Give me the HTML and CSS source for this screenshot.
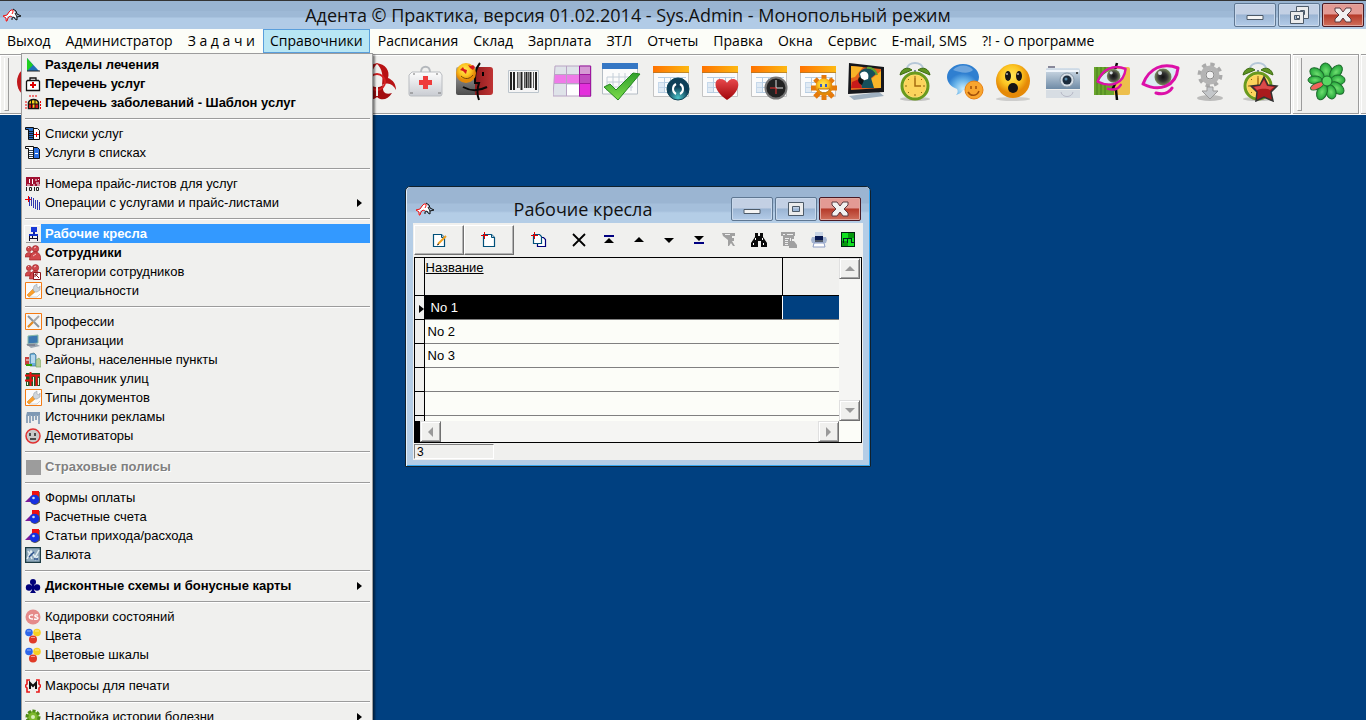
FILE: index.html
```html
<!DOCTYPE html>
<html lang="ru">
<head>
<meta charset="UTF-8">
<meta name="viewport" content="width=device-width, initial-scale=1.0">
<title>Адента © Практика</title>
<link rel="stylesheet" href="styles.css">
</head>
<body>

<!-- shared shapes and gradients -->
<svg class="defs" aria-hidden="true">
    <defs>
        <linearGradient id="g-orange"><stop offset="0" stop-color="#ff7200"/><stop offset="1" stop-color="#fdb913"/></linearGradient>
        <linearGradient id="g-white" x2="0" y2="1"><stop offset="0" stop-color="#fdfdfd"/><stop offset="1" stop-color="#c9ccd2"/></linearGradient>
        <linearGradient id="g-red" x2="0" y2="1"><stop offset="0" stop-color="#e8484c"/><stop offset="1" stop-color="#a00509"/></linearGradient>
        <linearGradient id="g-dark-red"><stop offset="0" stop-color="#8c1a1c"/><stop offset="1" stop-color="#c03434"/></linearGradient>
        <linearGradient id="g-grey" x2="0" y2="1"><stop offset="0" stop-color="#a8a8a8"/><stop offset="1" stop-color="#4c4c4c"/></linearGradient>
        <linearGradient id="g-steel" x2="0" y2="1"><stop offset="0" stop-color="#d5e0ea"/><stop offset="1" stop-color="#6f8ba6"/></linearGradient>
        <linearGradient id="g-check" x2="0" y2="1"><stop offset="0" stop-color="#2fa02c"/><stop offset="1" stop-color="#7ddc4a"/></linearGradient>
        <radialGradient id="g-face" cx=".45" cy=".35"><stop offset="0" stop-color="#ffe95a"/><stop offset=".6" stop-color="#fcc421"/><stop offset="1" stop-color="#e58a08"/></radialGradient>
        <radialGradient id="g-bubble" cx=".5" cy=".8"><stop offset="0" stop-color="#c8ecfc"/><stop offset=".6" stop-color="#64b0e8"/><stop offset="1" stop-color="#2f7fd0"/></radialGradient>
        <radialGradient id="g-teal" cx=".5" cy=".9"><stop offset="0" stop-color="#4cc4c8"/><stop offset="1" stop-color="#0e3f58"/></radialGradient>
        <radialGradient id="g-eye"><stop offset="0" stop-color="#111"/><stop offset=".5" stop-color="#333"/><stop offset="1" stop-color="#7c8c60"/></radialGradient>
        <radialGradient id="g-leaf"><stop offset="0" stop-color="#6fdf70"/><stop offset="1" stop-color="#23a53a"/></radialGradient>
    </defs>
    <symbol id="logo" viewBox="0 0 20 14">
        <path d="M1 8h2l3-2 3-4h3l1 3 2 3-2 2-3-2-2 1-2-1-2 3-1 2H4v-3z" fill="#fff"/>
        <path d="M10 9L8 8l-2 2-1 3H4v-3L1 8l4-1 2-3 2-2h2v2l-1 2" fill="none" stroke="#f01010"/>
        <path d="M11 1l3 2 1 3 4 2-4 1v3l-2-1-1-2-2 1v2M13 5l2 4" fill="none" stroke="#111"/>
    </symbol>
    <symbol id="calendar" viewBox="0 0 40 40">
        <path d="M2.500 5.500h35v29h-35z" fill="#fbfbfb" stroke="#c4c4c4"/>
        <path d="M2 4h36v7H2z" fill="url(#g-orange)"/><path d="M2 10.500h36" stroke="#a8762c" stroke-opacity=".7"/>
        <path d="M7 15.500h28M7 20.500h28M7 25.500h28M7 30.500h28M7.500 20v10M13.500 15v15M19.500 15v15M25.500 15v15M31.500 15v15" stroke="#b8cee2" fill="none"/>
        <path d="M7 20h6v10H7z" fill="#cfe0f0" fill-opacity=".6"/>
    </symbol>
    <symbol id="alarm" viewBox="0 0 40 40">
        <ellipse cx="19" cy="37" rx="15" ry="2" fill="#999" fill-opacity=".5"/>
        <path d="M11 7c0-8 16-8 16 0" fill="none" stroke="#b5c7d8" stroke-width="2"/>
        <path d="M4 13c1-6 7-9 12-5zM34 13c-1-6-7-9-12-5z" fill="#5d9422" stroke="#3d6b13"/>
        <path d="M18 8h2v4h-2z" fill="#789"/>
        <circle cx="19" cy="24" r="13" fill="#ffe27a" stroke="#6a9a1e" stroke-width="3"/>
        <circle cx="19" cy="24" r="11" fill="#fcd45c"/>
        <path d="M19 16v8h6" fill="none" stroke="#a56c10" stroke-width="1.500"/>
        <path d="M19 14v2M19 32v2M9 24h2M27 24h2M12 17l1 1M12 31l1-1M26 31l-1-1M26 17l-1 1" stroke="#8a6410"/>
    </symbol>
    <symbol id="eye" viewBox="0 0 40 40">
        <path d="M3 22C9 9 23 4 36 7c-2 15-15 22-33 15z" fill="#dcebf4"/>
        <circle cx="22" cy="15" r="8.500" fill="url(#g-eye)"/><circle cx="19" cy="11" r="2" fill="#d4dce0"/>
        <path d="M2 22C8 6 22 0 37 6c-2 19-19 24-35 16zM15 31c7 2 13 0 16-5" fill="none" stroke="#dc10a8" stroke-width="3" stroke-linecap="round" stroke-linejoin="round"/>
    </symbol>
    <symbol id="people" viewBox="0 0 16 16">
        <g fill="#d0484c" stroke="#9a1c20" stroke-width=".6"><circle cx="4" cy="4" r="2.600"/><path d="M0 12c0-6 8-6 8 0z"/><circle cx="10.500" cy="3.800" r="3.200"/><path d="M4.500 15c0-11 11.500-11 11.500 0z"/></g>
        <path d="M9 3l2-1M3 3l1-1M8 11l3-2" stroke="#f8c0c0"/>
    </symbol>
    <symbol id="wrench" viewBox="0 0 17 17">
        <path d="M.5.500h16v16H.5z" fill="#fbfbfb" stroke="#f47b14"/>
        <path d="M4 15h8l3-3" stroke="#d4d4d4" fill="none"/>
        <path d="M2 13l6-6 2 3-6 5z" fill="#fba02c" stroke="#d97a10" stroke-width=".5"/>
        <path d="M8 8l1-4 3-2 0 3 2 1 1-2 0 4-3 2-2 0z" fill="#cfd6dc" stroke="#8d979f" stroke-width=".5"/>
    </symbol>
    <symbol id="shapes" viewBox="0 0 16 16">
        <path d="M14 2h1v11h-2z" fill="#777"/><path d="M7 1h7v10H7z" fill="#f01010"/>
        <path d="M0 12l7-7v7z" fill="#7a1a9a"/><circle cx="10" cy="10" r="5" fill="#555"/><circle cx="9.500" cy="9.500" r="4.700" fill="#1530e0"/><circle cx="8.500" cy="8" r="1.300" fill="#cde"/>
    </symbol>
    <symbol id="balls" viewBox="0 0 16 16">
        <circle cx="4" cy="4.500" r="3.800" fill="#2e66ea"/><circle cx="12" cy="4.500" r="3.800" fill="#f6cf22"/><circle cx="8" cy="11.500" r="4" fill="#e03a26"/>
        <path d="M2 3h4M10 3h4M6 9.500h4" stroke="#fff" stroke-opacity=".5"/>
    </symbol>
    <symbol id="sheet" viewBox="0 0 16 16">
        <path d="M2.500 2.500h8l3 3v9h-11z" fill="#fff" stroke="#00507a" stroke-width="1.200"/><path d="M10.500 2.500v3h3" fill="#bcd" stroke="#00507a"/>
    </symbol>
</svg>

<header class="titlebar">
    <svg class="logo"><use href="#logo"/></svg>
    <h1 class="title">Адента © Практика, версия 01.02.2014 - Sys.Admin - Монопольный режим</h1>
    <div class="window-buttons">
        <button class="window-button" aria-label="Свернуть"><svg width="20" height="20"><path d="M2 10.500h16v4H2z" fill="#f4f4f4" stroke="#4d5a68"/></svg></button>
        <button class="window-button" aria-label="Восстановить"><svg width="22" height="20"><path d="M8.500 1.500h12v12h-12zM12.500 5.500v4h4v-4z" fill="#ececec" stroke="#4d5a68" fill-rule="evenodd"/><path d="M2.500 6.500h13v12h-13zM6.500 10.500v4h5v-4z" fill="#ececec" stroke="#4d5a68" fill-rule="evenodd"/></svg></button>
        <button class="window-button close" aria-label="Закрыть"><svg width="20" height="20"><path d="M2 3h5l3 4 3-4h5v3l-4 4 4 4v3h-5l-3-4-3 4H2v-3l4-4-4-4z" fill="#f1f1f1" stroke="#5c3a40"/></svg></button>
    </div>
</header>

<nav class="menubar">
    <a href="#">Выход</a>
    <a href="#">Администратор</a>
    <a href="#">З а д а ч и</a>
    <a href="#" class="active">Справочники</a>
    <a href="#">Расписания</a>
    <a href="#">Склад</a>
    <a href="#">Зарплата</a>
    <a href="#">ЗТЛ</a>
    <a href="#">Отчеты</a>
    <a href="#">Правка</a>
    <a href="#">Окна</a>
    <a href="#">Сервис</a>
    <a href="#">E-mail, SMS</a>
    <a href="#">?! - О программе</a>
</nav>

<div class="toolbar">
    <div class="tool-group">
        <button class="tool" aria-label="Выход"><svg viewBox="0 0 40 40"><circle cx="20" cy="20" r="17" fill="#c0181c"/></svg></button>
        <button class="tool after-gap" aria-label="Заболевания"><svg viewBox="0 0 40 40">
            <path d="M19 1c10 1 14 8 12 15 5 2 8 6 8 12-3-6-8-8-14-5 1-9 1-16-6-22z" fill="#b81214"/>
            <path d="M21 1C11 2 7 9 9 16c-5 2-8 6-8 12 3-6 8-8 14-5-1-9-1-16 6-22z" fill="#b81214"/>
            <path d="M26 23c-1 8 3 10 9 8-4 7-11 8-15 4-4 4-11 3-15-4 6 2 10 0 9-8 4 3 8 3 12 0z" fill="#a30d10"/>
            <circle cx="20" cy="20" r="8" fill="none" stroke="#d42022" stroke-width="2"/><circle cx="20" cy="20" r="3" fill="#f0f0ee"/><path d="M20 25v9" stroke="#f0f0ee" stroke-width="2"/></svg></button>
        <button class="tool" aria-label="Аптечка"><svg viewBox="0 0 40 40">
            <path d="M15 10c0-7 9-7 9 0" fill="none" stroke="#b4b8bc" stroke-width="2"/><path d="M6 10h28l2 3v19q0 2-2 2H5q-2 0-2-2V13z" fill="url(#g-white)" stroke="#b9bcc0"/>
            <path d="M17 14h5v4h4v5h-4v4h-5v-4h-4v-5h4z" fill="#ee3b3b"/><path d="M4 31h3M32 31h3M8 11v2M31 11v2" stroke="#777"/></svg></button>
        <button class="tool" aria-label="Смайл"><svg viewBox="0 0 40 40">
            <path d="M1 7q0-2 2-2h20v28H3q-2 0-2-2z" fill="url(#g-grey)"/><path d="M22 5h13q3 0 3 3v22q0 3-3 3H20V22h-1q0-9 3-17z" fill="url(#g-dark-red)"/>
            <path d="M25 1c-5 6-5 12-5 20h4c-2 6-2 12 0 17M8 25c9 5 16 4 24 0" fill="none" stroke="#080808" stroke-width="2"/><path d="M28 10v4" stroke="#000" stroke-width="2"/>
            <circle cx="11" cy="11" r="10" fill="url(#g-face)"/><path d="M8 9l3 3 1-4-3-1-1-2-3 3zM15 6l3 2 2-3-2-2-2 1-3-1z" fill="#d81a1a"/><path d="M6 14c4 4 9 3 12-1" fill="none" stroke="#7b4a08"/></svg></button>
        <button class="tool" aria-label="Штрих-код"><svg viewBox="0 0 40 40">
            <path d="M4.500 8.500h30v22h-30z" fill="#f5f5f5" stroke="#bcc5cc"/><path d="M7 10v18M10 10v18M17.500 10v18M22.500 10v16M26.500 10v16M32 10v18" stroke="#222" stroke-width="2"/><path d="M13.500 10v16M15 10v16M20.500 10v16M24.500 10v16M29.500 10v16" stroke="#555"/></svg></button>
        <button class="tool" aria-label="Таблица"><svg viewBox="0 0 40 40">
            <path d="M2 4h36v30H0z" fill="#dfe3e9"/><path d="M1 12h25v9H1z" fill="#ef7ae8"/><path d="M26 4h12v9H26z" fill="#d59ad4"/><path d="M26 13h12v8H26z" fill="#c04cc0"/><path d="M26 21h12v14H26z" fill="#e42fdc"/><path d="M13 23h13v11H13z" fill="#fff"/>
            <path d="M2 4h36v30H0zM1 12.500h37M1 21.500h37M13.500 4v30" fill="none" stroke="#b9a4c4"/><path d="M26.500 4h11v30h-11zM26 12.500h12M26 21.500h12" fill="none" stroke="#a018a0"/></svg></button>
        <button class="tool" aria-label="Готово"><svg viewBox="0 0 40 40">
            <path d="M.5 2h35v30H.5z" fill="#fbfbfb" stroke="#b4bcc4"/><path d="M0 1h36v6H0z" fill="#3577c4"/><path d="M5 15h26M5 20h26M5 25h26M5 15v14M11 11v18M17 11v18M23 11v18M29 11v18" stroke="#c4ced8"/>
            <path d="M2 25l6-3 6 6L31 11l7 1L16 38z" fill="url(#g-check)" stroke="#23861f"/></svg></button>
        <button class="tool" aria-label="Синхронизация"><svg viewBox="0 0 40 40">
            <use href="#calendar"/><circle cx="27" cy="27" r="11" fill="url(#g-teal)" stroke="#0d4356"/><path d="M25 22c-4 2-4 8 0 10M29 22c4 2 4 8 0 10" fill="none" stroke="#fff" stroke-width="2"/></svg></button>
        <button class="tool" aria-label="Избранное"><svg viewBox="0 0 40 40">
            <use href="#calendar"/><path d="M27 38C12 28 14 17 20 17c4 0 6 2 7 4 1-2 3-4 6-4 7 0 9 11-6 21z" fill="url(#g-red)"/></svg></button>
        <button class="tool" aria-label="Время"><svg viewBox="0 0 40 40">
            <use href="#calendar"/><circle cx="27" cy="26" r="10.500" fill="#222" stroke="#777" stroke-width="2"/><path d="M27 18v8h7" fill="none" stroke="#ddd"/><path d="M27 26h-6M27 26v6" stroke="#e33"/></svg></button>
        <button class="tool" aria-label="Праздники"><svg viewBox="0 0 40 40">
            <use href="#calendar"/><g stroke="#e57a0c" stroke-width="5"><path d="M26 13v25M13 26h26M17 17l18 18M35 17L17 35"/></g><circle cx="26" cy="25" r="8.500" fill="url(#g-face)"/><path d="M23 22v3M28 22v3" stroke="#345cc8" stroke-width="2"/><path d="M20 27c3 5 9 5 12 0z" fill="#fff" stroke="#b87310"/></svg></button>
        <button class="tool" aria-label="Телевизор"><svg viewBox="0 0 40 40">
            <path d="M2 34l30-4 5 4-30 4z" fill="#9fb0c0"/><path d="M2 1l35 4v25L1 32z" fill="#15171c"/><path d="M4 4l30 3v19L4 28z" fill="#e3641c"/><path d="M4 4l12 1-8 10-4 1zM24 17l10-8v17H22z" fill="#f8b428"/><path d="M5 20l7-3 3 9H4z" fill="#c81a1a"/><path d="M12 12c2-7 14-8 17 0l-5 4 3 10H15z" fill="#16505c"/><path d="M13 12c4-5 10-2 8 5l-6 2z" fill="#fff"/><path d="M12 15c-2 4 0 7 3 8l2-5z" fill="#111"/><path d="M20 6c5-1 9 3 10 7" stroke="#5ca032" stroke-width="2" fill="none"/></svg></button>
        <button class="tool" aria-label="Будильник"><svg viewBox="0 0 40 40"><use href="#alarm"/></svg></button>
        <button class="tool" aria-label="Сообщения"><svg viewBox="0 0 40 40">
            <path d="M18 2c9 0 16 6 16 13S27 28 18 28c-1 2-3 4-7 5 2-2 2-4 1-6C6 25 2 20 2 15 2 8 9 2 18 2z" fill="url(#g-bubble)"/><path d="M8 8c5-6 16-6 20 0-5 5-14 2-20 0z" fill="#fff" fill-opacity=".3"/>
            <circle cx="29" cy="28" r="9" fill="#f9a52e" stroke="#e88212"/><path d="M26 24v3M31 24v3M23 30c3 5 9 4 11-1" fill="none" stroke="#a14e08" stroke-width="1.500"/></svg></button>
        <button class="tool" aria-label="Удивление"><svg viewBox="0 0 40 40">
            <ellipse cx="19" cy="37" rx="17" ry="2" fill="#aaa" fill-opacity=".5"/><circle cx="19" cy="19" r="17" fill="url(#g-face)"/><ellipse cx="14" cy="14" rx="3" ry="5" fill="#151515"/><ellipse cx="25" cy="14" rx="3" ry="5" fill="#151515"/><ellipse cx="19" cy="26" rx="5" ry="5" fill="#151515"/><path d="M13 11v2M24 11v2" stroke="#fff"/></svg></button>
        <button class="tool" aria-label="Фото"><svg viewBox="0 0 40 40">
            <path d="M3 7q0-1 1-1h31q2 0 2 2v19H3z" fill="url(#g-steel)"/><path d="M5 6h7v-2H5z" fill="#889"/><path d="M3 9h33" stroke="#eef4fa" stroke-width="2"/><circle cx="24" cy="18" r="7" fill="#d5dde5" stroke="#8697a8"/><circle cx="24" cy="18" r="4.500" fill="#1b2b3c"/><circle cx="23" cy="17" r="1.500" fill="#58a"/><circle cx="34" cy="11" r="1" fill="#222"/>
            <path d="M3 28h34v8H3z" fill="#c7d1dc" fill-opacity=".6"/><path d="M18 30c1 6 11 6 12 0" fill="none" stroke="#aab" stroke-opacity=".7"/></svg></button>
        <button class="tool" aria-label="Картинка"><svg viewBox="0 0 40 40">
            <path d="M2 5h21v28H2z" fill="#6aa52c"/><path d="M5 5v28M9 5v28M13 5v28" stroke="#47801c"/><path d="M22 5h14q2 0 2 2v24q0 2-2 2H22z" fill="#edbf4c"/><path d="M25 1l-2 7v14l-2 4 3 2 1 10" stroke="#080808" stroke-width="2.500" fill="none"/>
            <use href="#eye" x="4" y="2" width="32" height="32"/></svg></button>
        <button class="tool" aria-label="Просмотр"><svg viewBox="0 0 40 40"><use href="#eye"/></svg></button>
        <button class="tool" aria-label="Настройки"><svg viewBox="0 0 40 40">
            <ellipse cx="20" cy="36" rx="13" ry="3" fill="#999" fill-opacity=".6"/><circle cx="20" cy="13" r="10" fill="none" stroke="#aaa" stroke-width="5" stroke-dasharray="4 3.850"/><circle cx="20" cy="13" r="7" fill="#ddd" stroke="#b4b4b4" stroke-width="5"/><circle cx="20" cy="13" r="4" fill="#f1f1f1" stroke="#888"/><path d="M17 25h6v4h5l-8 8-8-8h5z" fill="#c4c7ca" stroke="#999"/></svg></button>
        <button class="tool" aria-label="Напоминания"><svg viewBox="0 0 40 40"><use href="#alarm"/><path d="M25 15l4 8 9 1-6 6 2 9-9-4-8 4 1-9-6-6 9-1z" fill="#a91a1c" stroke="#333" stroke-width="1.500"/><path d="M25 18l3 6 7 1-4 3c-4-2-10-1-13 0l-3-3 6-1z" fill="#f06060" fill-opacity=".7"/></svg></button>
    </div>
    <div class="tool-group">
        <button class="tool icq" aria-label="ICQ"><svg viewBox="0 0 40 40">
            <g stroke="#1d6b2c"><g fill="url(#g-leaf)"><ellipse cx="19" cy="9" rx="6" ry="8" transform="rotate(-12 19 9)"/><ellipse cx="29" cy="10" rx="5" ry="8" transform="rotate(40 29 10)"/><ellipse cx="31" cy="18" rx="7" ry="5"/><ellipse cx="30" cy="26" rx="8" ry="5" transform="rotate(38 30 26)"/><ellipse cx="24" cy="30" rx="5" ry="7" transform="rotate(-15 24 30)"/><ellipse cx="15" cy="30" rx="5" ry="8" transform="rotate(20 15 30)"/><ellipse cx="10" cy="12" rx="8" ry="5" transform="rotate(35 10 12)"/><ellipse cx="8" cy="18" rx="7" ry="4"/></g><ellipse cx="10" cy="24" rx="7" ry="3" fill="#f0645c" transform="rotate(-25 10 24)"/><circle cx="20" cy="19" r="5" fill="#58d864"/></g></svg></button>
    </div>
    <div class="tool-group rest"></div>
</div>

<ul class="dropdown">
    <li><a href="#" class="bold"><svg><path d="M2 1v13h12z" fill="#2070b8"/><path d="M2 1v13l6-6z" fill="#20d020"/><path d="M2 14h13" stroke="#222"/></svg><span>Разделы лечения</span></a></li>
    <li><a href="#" class="bold"><svg><path d="M5 4V2h6v2M2.500 4.500h11l1 1v9h-13v-9z" fill="#fff" stroke="#111" stroke-width="1.300"/><path d="M8 6v6M5 9h6" stroke="#e00000" stroke-width="2"/></svg><span>Перечень услуг</span></a></li>
    <li><a href="#" class="bold"><svg><path d="M4 1h9M1 6v8M15.500 6v8" stroke="#e00" stroke-dasharray="2 1"/><path d="M3.500 13.500v-6q1-3 5-3t5 3v6z" fill="#f5d020" stroke="#111" stroke-width="1.500"/><path d="M4 9h4v4H4zM10 9h3v4h-3z" fill="#d01818"/><path d="M3 9h10M6.500 4v9M10 4v9" stroke="#111"/></svg><span>Перечень заболеваний - Шаблон услуг</span></a></li>
    <li class="separator"></li>
    <li><a href="#"><svg><path d="M7.500 2.500h5l2 2v9h-7z" fill="#fff" stroke="#111"/><path d="M9 8.500h5M11.500 6v5" stroke="#e00"/><path d="M.5 1.500h8v12h-5v-10h-3z" fill="#2b6fc8" stroke="#111"/><path d="M4 5.500h4M4 7.500h4M4 9.500h4M4 11.500h4" stroke="#123"/></svg><span>Списки услуг</span></a></li>
    <li><a href="#"><svg><path d="M7.500 2.500h5l2 2v9h-7z" fill="#2b6fe0" stroke="#111"/><path d="M10 8.500h3" stroke="#fff"/><path d="M.5 1.500h8v12h-5v-10h-3z" fill="#fff" stroke="#111"/><path d="M4 5.500h4M4 7.500h4M4 9.500h4M4 11.500h4" stroke="#345"/></svg><span>Услуги в списках</span></a></li>
    <li class="separator"></li>
    <li><a href="#"><svg><path d="M1 1h14v9H1z" fill="#a01030"/><path d="M4.500 3v4M7.500 3v5M11 3v2M13.500 3v1M11 7h3" stroke="#fff"/><path d="M2 9h3M8 9h2M12 9h3" stroke="#fff"/><path d="M1.500 11v4M4.500 11.500h2v3h-2zM9.500 11v4M11.500 11.500h2v3h-2z" stroke="#222" fill="none"/></svg><span>Номера прайс-листов для услуг</span></a></li>
    <li><a href="#" class="parent"><svg><path d="M4.500 2v9M6.500 2v9M8.500 3v10M10.500 5v9M12.500 5v10M14.500 7v8" stroke="#3038b0"/><path d="M0 4.500h6M3.500 1v6" stroke="#e00"/></svg><span>Операции с услугами и прайс-листами</span></a></li>
    <li class="separator"></li>
    <li><a href="#" class="bold selected"><svg><path d="M6 1h6v5H6z" fill="#1838d8"/><path d="M8 6h2v2H8z" fill="#1020a0"/><path d="M4 8h9v2H4z" fill="#1030c8"/><path d="M4.500 10v5M7.500 10v3M12.500 10v5M4 12.500h8" stroke="#101030"/></svg><span>Рабочие кресла</span></a></li>
    <li><a href="#" class="bold"><svg><use href="#people"/></svg><span>Сотрудники</span></a></li>
    <li><a href="#"><svg><use href="#people"/><path d="M8.500 8.500h7v7h-7z" fill="#fff" stroke="#8a1518"/><path d="M10 10l4 4M10 10h3M10 10v3" stroke="#8a1518"/></svg><span>Категории сотрудников</span></a></li>
    <li><a href="#"><svg class="framed"><use href="#wrench"/></svg><span>Специальности</span></a></li>
    <li class="separator"></li>
    <li><a href="#"><svg class="framed" viewBox="0 0 17 17"><path d="M.5.500h16v16H.5z" fill="#f5f5f5" stroke="#f47b14"/><path d="M3 3l11 11" stroke="#8b949c" stroke-width="2"/><path d="M14 3L3 14" stroke="#a9a9a9" stroke-width="2"/><path d="M3 14l5-5" stroke="#e98c20" stroke-width="2"/></svg><span>Профессии</span></a></li>
    <li><a href="#"><svg><path d="M3 3l10-1v8l-10 1z" fill="#3b78b0" stroke="#8ba"/><path d="M1 11l9-1 5 3-9 2z" fill="#99a5b0"/><path d="M2 12h8" stroke="#667"/></svg><span>Организации</span></a></li>
    <li><a href="#"><svg><path d="M5 2l4-1 2 2v11H5z" fill="#6cb0dc" stroke="#3a6880" stroke-width=".7"/><path d="M0 5h4v8H0z" fill="#c8423c"/><path d="M11 8l3-2 2 3v6h-5z" fill="#b8cc98" stroke="#7a6" stroke-width=".7"/><path d="M6 4h4M6 6h4M6 8h4M6 10h4M1 8h3" stroke="#fff"/><path d="M1 13h6" stroke="#390" stroke-width="2"/></svg><span>Районы, населенные пункты</span></a></li>
    <li><a href="#"><svg><path d="M1 2h14v13H1z" fill="#1e5a28"/><path d="M0 4.500h15M0 9.500h9M5.500 1v14M11.500 4v11" stroke="#e81010" stroke-width="2"/><path d="M8.500 6v9M13.500 7v7M2.500 11v3" stroke="#f0f0e0"/></svg><span>Справочник улиц</span></a></li>
    <li><a href="#"><svg class="framed"><use href="#wrench"/></svg><span>Типы документов</span></a></li>
    <li><a href="#"><svg><path d="M2 3h13v4H1z" fill="#7f99b4"/><path d="M2 7v7M5 6v8M8 7v5M11 6v5M14 6v9" stroke="#91a6bc" stroke-width="2"/></svg><span>Источники рекламы</span></a></li>
    <li><a href="#"><svg><circle cx="8" cy="8" r="7" fill="#c9c9c9" stroke="#e03030" stroke-width="1.500"/><path d="M5 5v3M10 5v3M5 11h6" stroke="#222" stroke-width="1.500"/></svg><span>Демотиваторы</span></a></li>
    <li class="separator"></li>
    <li><a href="#" class="bold disabled"><svg><path d="M1 1h15v15H1z" fill="#9c9c9c"/></svg><span>Страховые полисы</span></a></li>
    <li class="separator"></li>
    <li><a href="#"><svg><use href="#shapes"/></svg><span>Формы оплаты</span></a></li>
    <li><a href="#"><svg><use href="#shapes"/></svg><span>Расчетные счета</span></a></li>
    <li><a href="#"><svg><use href="#shapes"/></svg><span>Статьи прихода/расхода</span></a></li>
    <li><a href="#"><svg><path d="M.5.500h15v15H.5z" fill="#8fa9bc" stroke="#1d3c44" stroke-width="1.500"/><path d="M2 12l4-8 4 6 4-7M3 4l4 8M10 13l3-4" stroke="#e4eef2" stroke-width="1.500" fill="none"/><path d="M4 10l5-5M9 12h4" stroke="#2a508c" stroke-width="1.500"/></svg><span>Валюта</span></a></li>
    <li class="separator"></li>
    <li><a href="#" class="bold parent"><svg><g fill="#00007a"><circle cx="8" cy="4" r="3"/><circle cx="4" cy="9.500" r="3.200"/><circle cx="12" cy="9.500" r="3.200"/><path d="M7 5h2v7l2 3H5l2-3z"/></g></svg><span>Дисконтные схемы и бонусные карты</span></a></li>
    <li class="separator"></li>
    <li><a href="#"><svg><circle cx="8" cy="8" r="7.500" fill="#e58a8a"/><path d="M8 6c-5-1-5 4 0 4M13 6c-4-1-4 2-1 2 2 1 1 3-3 2" stroke="#fff" stroke-width="1.300" fill="none"/></svg><span>Кодировки состояний</span></a></li>
    <li><a href="#"><svg><use href="#balls"/></svg><span>Цвета</span></a></li>
    <li><a href="#"><svg><use href="#balls"/></svg><span>Цветовые шкалы</span></a></li>
    <li class="separator"></li>
    <li><a href="#"><svg><path d="M5 2H2v4L0 8l2 2v4h3M11 2h3v4l2 2-2 2v4h-3" stroke="#e81818" stroke-width="1.600" fill="none"/><path d="M5 11V5l3 3 3-3v6" stroke="#111" stroke-width="2" fill="none"/></svg><span>Макросы для печати</span></a></li>
    <li class="separator"></li>
    <li><a href="#" class="parent"><svg><circle cx="8" cy="8" r="6" fill="#7cb82c" stroke="#4f8a18" stroke-width="3" stroke-dasharray="3 1.500"/><circle cx="8" cy="8" r="2" fill="#d8ecb8"/></svg><span>Настройка истории болезни</span></a></li>
</ul>

<main class="desktop">
    <section class="window">
        <header class="window-title">
            <svg class="logo"><use href="#logo"/></svg>
            <h2 class="title">Рабочие кресла</h2>
            <div class="window-buttons">
                <button class="window-button" aria-label="Свернуть"><svg width="20" height="20"><path d="M2 10.500h16v4H2z" fill="#f4f4f4" stroke="#4d5a68"/></svg></button>
                <button class="window-button" aria-label="Развернуть"><svg width="20" height="20"><path d="M2.500 3.500h15v13h-15zM6.500 7.500v5h7v-5z" fill="#ececec" stroke="#4d5a68" fill-rule="evenodd"/></svg></button>
                <button class="window-button close" aria-label="Закрыть"><svg width="20" height="20"><path d="M2 3h5l3 4 3-4h5v3l-4 4 4 4v3h-5l-3-4-3 4H2v-3l4-4-4-4z" fill="#f1f1f1" stroke="#5c3a40"/></svg></button>
            </div>
        </header>
        <div class="client">
            <div class="record-bar">
                <button class="record-button wide raised" aria-label="Изменить"><svg><use href="#sheet"/><path d="M7 12l8-8" stroke="#f0a020" stroke-width="2"/><path d="M6 13l2-1" stroke="#222"/></svg></button>
                <button class="record-button wide raised" aria-label="Добавить"><svg><use href="#sheet"/><path d="M0 3.500h7M3.500 0v7" stroke="#e00000"/></svg></button>
                <button class="record-button wide" aria-label="Копировать"><svg><path d="M6.500 5.500h6l2 2v7h-8z" fill="#fff" stroke="#00007a" stroke-width="1.200"/><path d="M2.500 2.500h6l2 2v7h-8z" fill="#fff" stroke="#00507a" stroke-width="1.200"/><path d="M0 3.500h7M3.500 0v7" stroke="#e00000"/></svg></button>
                <button class="record-button" aria-label="Удалить"><svg><path d="M2 2l12 12M14 2L2 14" stroke="#000" stroke-width="1.800"/></svg></button>
                <button class="record-button" aria-label="Первая"><svg><path d="M3 4h10" stroke="#000080" stroke-width="2"/><path d="M8 6l5 5H3z"/></svg></button>
                <button class="record-button" aria-label="Предыдущая"><svg><path d="M8 5l5 5H3z"/></svg></button>
                <button class="record-button" aria-label="Следующая"><svg><path d="M8 11l5-5H3z"/></svg></button>
                <button class="record-button" aria-label="Последняя"><svg><path d="M8 9l5-5H3z"/><path d="M3 11h10" stroke="#000080" stroke-width="2"/></svg></button>
                <button class="record-button" aria-label="Фильтр" disabled><svg><path d="M1 1h13v3h-3v2h2v3h-2l3 5h-2l-2-3-2 3H7V8L2 4z" fill="#a0a0a0"/><path d="M4 2.500h5" stroke="#eee"/></svg></button>
                <button class="record-button" aria-label="Поиск"><svg><path d="M4 1h3v3h2V1h3v4l4 6v4h-6V9H7v6H0v-4l4-6z" fill="#0a0a0a"/><path d="M4.500 6v2M11.500 6v2M2.500 11v2M12.500 11v2" stroke="#fff"/></svg></button>
                <button class="record-button" aria-label="Отчет" disabled><svg><path d="M0 0h14v4h-1v3h-2v2h2l3 4v3H8v-2H2V4H0z" fill="#a0a0a0"/><path d="M2 2.500h2M6 2.500h6M4 6.500h4M4 8.500h3M4 10.500h3M4 12.500h3M9.500 6v3" stroke="#eee"/></svg></button>
                <button class="record-button" aria-label="Печать"><svg><path d="M4 0h8v4H4z" fill="#c8d4e4"/><path d="M1 5h14l1 3-1 3H1L0 8z" fill="#a4b4d0"/><path d="M4 4h8v4H4z" fill="#081850"/><path d="M4 9h8" stroke="#000"/><path d="M3 11h10l1 4H2z" fill="#fff" stroke="#8c9cc4"/></svg></button>
                <button class="record-button" aria-label="График"><svg shape-rendering="crispEdges"><path d="M1 0h14v15H1z" fill="#10e020"/><path d="M8 1h6v5H8zM2 9h6v5H2z" fill="#04980c"/><path d="M3.500 11V6.500h4v4M7.500 6.500h4v4h2" stroke="#022" fill="none"/><path d="M1.500.500h13v14h-13z" fill="none" stroke="#021"/></svg></button>
            </div>
            <div class="grid-box">
                <div class="table-view">
                    <table class="records">
                        <thead>
                            <tr><td class="marker"></td><th class="name"><span>Название</span></th><td></td></tr>
                        </thead>
                        <tbody>
                            <tr class="current"><td class="marker"><svg width="5" height="8"><path d="M0 0l5 4-5 4z"/></svg></td><td class="name">No 1</td><td></td></tr>
                            <tr><td class="marker"></td><td class="name">No 2</td><td></td></tr>
                            <tr><td class="marker"></td><td class="name">No 3</td><td></td></tr>
                            <tr><td class="marker"></td><td class="name"></td><td></td></tr>
                            <tr><td class="marker"></td><td class="name"></td><td></td></tr>
                            <tr><td class="marker"></td><td class="name"></td><td></td></tr>
                        </tbody>
                    </table>
                </div>
                <div class="scroll vertical">
                    <button class="scroll-button" aria-label="Вверх"><svg width="10" height="6"><path d="M5 0l5 5H0z" fill="#999"/></svg></button>
                    <button class="scroll-button" aria-label="Вниз"><svg width="10" height="6"><path d="M5 5l5-5H0z" fill="#999"/></svg></button>
                </div>
                <div class="scroll horizontal">
                    <button class="scroll-button" aria-label="Влево"><svg width="6" height="10"><path d="M0 5l5-5v10z" fill="#999"/></svg></button>
                    <button class="scroll-button" aria-label="Вправо"><svg width="6" height="10"><path d="M5 5L0 0v10z" fill="#999"/></svg></button>
                </div>
            </div>
            <footer class="status"><span class="count">3</span></footer>
        </div>
    </section>
</main>

</body>
</html>
```

FILE: styles.css
```css
* {
    box-sizing: border-box;
}

body {
    display: flex;
    flex-direction: column;
    height: 100vh;
    margin: 0;
    overflow: hidden;
    font-family: "Liberation Sans", Arial, sans-serif;
    font-size: 13px;
    color: #000;
    background-color: #004080;
}

button {
    margin: 0;
    padding: 0;
    border: none;
    background: none;
}

a {
    color: inherit;
    text-decoration: none;
}

.defs {
    position: absolute;
    width: 0;
    height: 0;
}

/* title bars */
.titlebar {
    display: flex;
    align-items: center;
    height: 29px;
    padding: 0 2px;
    border-top: 1px solid #333;
    background: linear-gradient(#99b4d1 0 10px, #9eb9d6 10px 16px, #b1cbe6 17px);
}

.logo {
    width: 20px;
    height: 14px;
}

.title {
    flex: 1;
    margin: 0;
    font-family: "Open Sans", "Noto Sans", sans-serif;
    font-size: 18px;
    font-weight: normal;
    line-height: 26px;
    text-align: center;
    color: #111;
}

.window-buttons {
    display: flex;
    gap: 2px;
}

.window-button {
    display: flex;
    align-items: center;
    justify-content: center;
    width: 42px;
    height: 24px;
    border: 1px solid #5f7792;
    border-radius: 2px;
    background: linear-gradient(#c3d0e4 0 45%, #9ab4d3 50%, #b4cce8);
    box-shadow: inset 0 0 0 1px #c9d9ec;
}

.window-button.close {
    border-color: #4a1a24;
    background: linear-gradient(#e39a94 0 45%, #b53a2a 50%, #d0705c);
    box-shadow: inset 0 0 0 1px #e0a8a0;
}

/* main menu */
.menubar {
    display: flex;
    gap: 1px;
    height: 25px;
    padding-bottom: 1px;
    background-color: #fcfdf8;
    font-family: "Open Sans", "Noto Sans", sans-serif;
    font-size: 14px;
    line-height: 24px;
}

.menubar a {
    padding: 0 7px;
    white-space: nowrap;
}

.menubar .active {
    padding: 0 6px;
    border: 1px solid #5a9fdc;
    line-height: 22px;
    background-color: #b8e6f4;
}

/* toolbar */
.toolbar {
    display: flex;
    height: 61px;
    border-bottom: 1px solid #fff;
    background-color: #f0f0ee;
}

.tool-group {
    display: flex;
    align-items: center;
    padding: 0 6px 4px 4px;
    border: 1px solid #9c9c9c;
    border-left: none;
    box-shadow: inset 1px 1px #fff, 1px 0 #fff;
    margin-right: 2px;
}

.tool-group::before {
    content: "";
    width: 3px;
    height: 52px;
    margin: 4px 1px 0 0;
    border: 1px solid #9c9c9c;
    border-left-color: #fff;
    border-top: none;
}

.tool-group.rest {
    flex: 1;
    margin: 0;
}

.tool-group.rest::before {
    display: none;
}

.tool {
    flex: none;
    width: 49px;
    height: 48px;
    padding: 0 5px 0 4px;
}

.tool svg {
    display: block;
    width: 40px;
    height: 40px;
}

.tool.after-gap {
    margin-left: 294px;
}

/* drop-down menu */
.dropdown {
    position: absolute;
    top: 53px;
    left: 21px;
    z-index: 2;
    width: 352px;
    margin: 0;
    padding: 1px 2px;
    border: 1px solid #9c9c9c;
    background-color: #f0f0ee;
    box-shadow: 2px 2px 2px rgba(0, 0, 0, 0.5);
    list-style: none;
}

.dropdown a {
    display: flex;
    align-items: center;
    height: 19px;
    line-height: 19px;
    white-space: nowrap;
}

.dropdown svg {
    flex: none;
    width: 16px;
    height: 16px;
    margin-left: 1px;
}

.dropdown svg.framed {
    width: 17px;
    height: 17px;
    margin-right: -1px;
}

.dropdown span {
    flex: 1;
    padding-left: 4px;
}

.dropdown .bold {
    font-weight: bold;
}

.dropdown .selected {
    color: #fff;
}

.dropdown .selected svg {
    box-shadow: -1px -1px #fff, 1px 1px #999;
}

.dropdown .selected span {
    background-color: #3399ff;
}

.dropdown .disabled {
    color: #808080;
    text-shadow: 1px 1px #fff;
}

.dropdown .parent::after {
    content: "";
    margin-right: 8px;
    border: 4px solid transparent;
    border-left: 5px solid #000;
    border-right: none;
}

.dropdown .separator {
    height: 2px;
    margin: 6px 0 4px 1px;
    border-top: 1px solid #9c9c9c;
    border-bottom: 1px solid #fff;
}

/* child window */
.desktop {
    position: relative;
    flex: 1;
}

.window {
    position: absolute;
    top: 71px;
    left: 405px;
    width: 466px;
    padding: 0 7px 6px;
    border: 1px solid #10202c;
    border-radius: 5px 5px 0 0;
    background-color: #b4cde6;
    box-shadow: inset 1px 1px #e4f0fa, inset -1px -1px #38a8f0;
}

.window-title {
    display: flex;
    align-items: center;
    height: 36px;
    margin: 0 -6px;
    padding: 7px 8px 0;
    background: linear-gradient(#9bb5d2 0 16px, #a5bfdb 17px 24px, #b4cde6 26px);
    border-radius: 4px 4px 0 0;
}

.client {
    padding: 1px;
    background-color: #f0f0ee;
}

.record-bar {
    display: flex;
    height: 33px;
    padding: 1px 0 2px;
}

.record-button {
    display: flex;
    flex: none;
    align-items: center;
    justify-content: center;
    width: 30px;
}

.record-button.wide {
    width: 50px;
}

.record-button:last-child {
    flex: 1;
}

.record-button.raised {
    border: 1px solid;
    border-color: #fff #707070 #707070 #fff;
    box-shadow: inset -1px -1px #b4b4b4;
}

.record-button svg {
    flex: none;
    width: 16px;
    height: 16px;
}

.grid-box {
    display: grid;
    grid-template-columns: 1fr 22px;
    grid-template-rows: 163px 21px;
    border: 1px solid #000;
    background-color: #fcfdf8;
}

.table-view {
    overflow: hidden;
}

.records {
    width: 100%;
    border-collapse: collapse;
    table-layout: fixed;
}

.records td,
.records th {
    height: 24px;
    padding: 0 0 0 3px;
    border-bottom: 1px solid #808080;
    font-weight: normal;
    text-align: left;
}

.records thead td,
.records thead th {
    height: 37px;
    padding: 2px 0 0 1px;
    border-bottom-color: #000;
    background-color: #f0f0ee;
    vertical-align: top;
}

.records th span {
    text-decoration: underline;
}

.records thead .name {
    border-right: 1px solid #000;
}

.records .name {
    width: 358px;
}

.records .marker {
    width: 9px;
    padding: 0;
    border-right: 1px solid #000;
    border-bottom-color: #000;
    background-color: #f0f0ee;
    text-align: right;
}

.records .marker svg {
    display: block;
    margin: 3px 0 0 4px;
}

.records .current .name {
    padding-left: 6px;
    border-right: 1px solid #fff;
    color: #fff;
    background-color: #000;
}

.records .current td:last-child {
    background-color: #004080;
}

.scroll {
    display: flex;
    justify-content: space-between;
    background-color: #f5f5f3;
}

.scroll.vertical {
    flex-direction: column;
    padding-right: 1px;
}

.scroll.horizontal {
    border-left: 5px solid #000;
}

.scroll-button {
    display: flex;
    align-items: center;
    justify-content: center;
    width: 21px;
    height: 21px;
    border: 1px solid;
    border-color: #e0e0e0 #707070 #707070 #e0e0e0;
    background-color: #f0f0ee;
    box-shadow: inset 1px 1px #fff, inset -1px -1px #a4a4a4;
}

.status {
    padding-top: 1px;
}

.count {
    display: block;
    width: 80px;
    height: 15px;
    padding-left: 2px;
    border: 1px solid;
    border-color: #808080 #fff #fff #808080;
    font-size: 12px;
    line-height: 14px;
}
```
